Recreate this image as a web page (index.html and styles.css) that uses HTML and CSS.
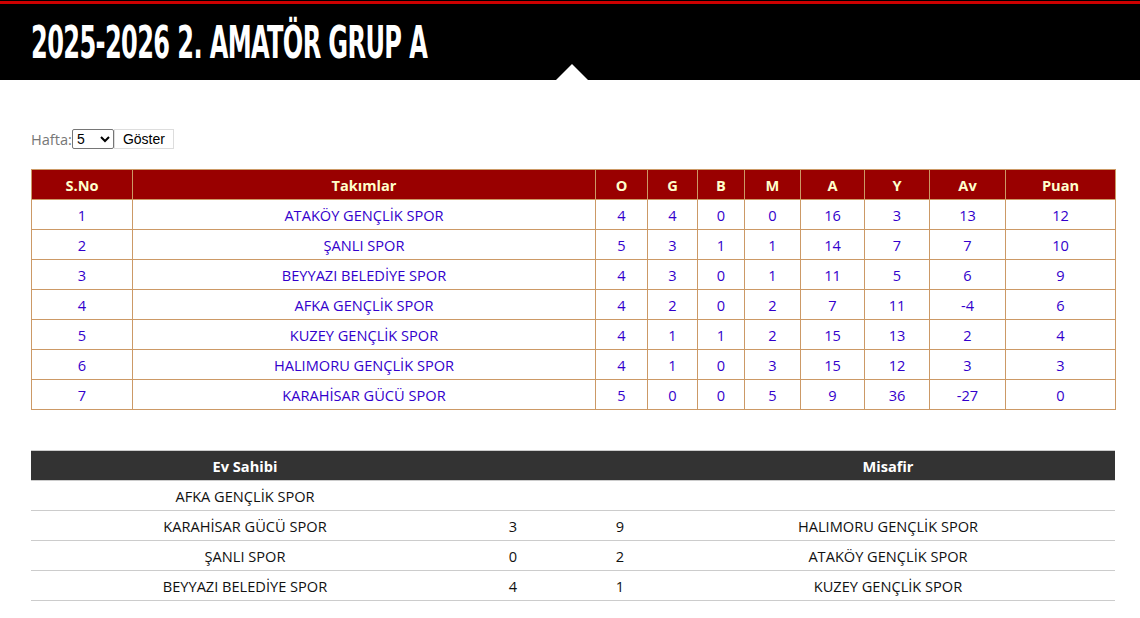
FILE: index.html
```html
<!DOCTYPE html>
<html lang="tr">
<head>
<meta charset="utf-8">
<title>2025-2026 2. Amatör Grup A</title>
<link rel="stylesheet" href="styles.css">
</head>
<body>
<header class="page-header">
  <div class="topline"></div>
  <h1 class="title">2025-2026 2. AMATÖR GRUP A</h1>
  <span class="notch"></span>
</header>
<main class="content">
  <form class="week-form">
    <label class="week-label">Hafta:</label><select class="week-select"><option>1</option><option>2</option><option>3</option><option>4</option><option selected>5</option></select><button type="button" class="week-btn">Göster</button>
  </form>

  <table class="standings">
    <colgroup>
      <col style="width:101px"><col style="width:463px"><col style="width:52px"><col style="width:50px"><col style="width:47px"><col style="width:56px"><col style="width:64px"><col style="width:65px"><col style="width:76px"><col style="width:110px">
    </colgroup>
    <thead>
      <tr><th>S.No</th><th>Takımlar</th><th>O</th><th>G</th><th>B</th><th>M</th><th>A</th><th>Y</th><th>Av</th><th>Puan</th></tr>
    </thead>
    <tbody>
      <tr><td>1</td><td>ATAKÖY GENÇLİK SPOR</td><td>4</td><td>4</td><td>0</td><td>0</td><td>16</td><td>3</td><td>13</td><td>12</td></tr>
      <tr><td>2</td><td>ŞANLI SPOR</td><td>5</td><td>3</td><td>1</td><td>1</td><td>14</td><td>7</td><td>7</td><td>10</td></tr>
      <tr><td>3</td><td>BEYYAZI BELEDİYE SPOR</td><td>4</td><td>3</td><td>0</td><td>1</td><td>11</td><td>5</td><td>6</td><td>9</td></tr>
      <tr><td>4</td><td>AFKA GENÇLİK SPOR</td><td>4</td><td>2</td><td>0</td><td>2</td><td>7</td><td>11</td><td>-4</td><td>6</td></tr>
      <tr><td>5</td><td>KUZEY GENÇLİK SPOR</td><td>4</td><td>1</td><td>1</td><td>2</td><td>15</td><td>13</td><td>2</td><td>4</td></tr>
      <tr><td>6</td><td>HALIMORU GENÇLİK SPOR</td><td>4</td><td>1</td><td>0</td><td>3</td><td>15</td><td>12</td><td>3</td><td>3</td></tr>
      <tr><td>7</td><td>KARAHİSAR GÜCÜ SPOR</td><td>5</td><td>0</td><td>0</td><td>5</td><td>9</td><td>36</td><td>-27</td><td>0</td></tr>
    </tbody>
  </table>

  <table class="fixtures">
    <colgroup>
      <col style="width:428px"><col style="width:108px"><col style="width:106px"><col style="width:442px">
    </colgroup>
    <thead>
      <tr><th>Ev Sahibi</th><th></th><th></th><th class="away">Misafir</th></tr>
    </thead>
    <tbody>
      <tr><td>AFKA GENÇLİK SPOR</td><td></td><td></td><td class="away"></td></tr>
      <tr><td>KARAHİSAR GÜCÜ SPOR</td><td>3</td><td>9</td><td class="away">HALIMORU GENÇLİK SPOR</td></tr>
      <tr><td>ŞANLI SPOR</td><td>0</td><td>2</td><td class="away">ATAKÖY GENÇLİK SPOR</td></tr>
      <tr><td>BEYYAZI BELEDİYE SPOR</td><td>4</td><td>1</td><td class="away">KUZEY GENÇLİK SPOR</td></tr>
    </tbody>
  </table>
</main>
</body>
</html>
```

FILE: styles.css
```css
html, body {
  margin: 0;
  padding: 0;
  background: #fff;
}
body {
  font-family: "Open Sans", "DejaVu Sans", sans-serif;
  font-size: 14.6px;
  color: #333;
}
.page-header {
  position: relative;
  background: #000;
  height: 80px;
  padding-top: 1px;
  box-sizing: border-box;
}
.topline {
  height: 3px;
  background: #cc0000;
}
.title {
  margin: 0;
  padding: 16px 0 0 31px;
  font-family: "DejaVu Sans Condensed", "DejaVu Sans", sans-serif;
  font-stretch: condensed;
  font-weight: bold;
  font-size: 44px;
  line-height: 46px;
  color: #fff;
  letter-spacing: -1px;
  white-space: nowrap;
  transform: scaleX(0.608);
  transform-origin: 31px 0;
}
.notch {
  position: absolute;
  left: 556px;
  bottom: 0;
  width: 0;
  height: 0;
  border-left: 16px solid transparent;
  border-right: 16px solid transparent;
  border-bottom: 16px solid #fff;
}
.content {
  padding: 49px 25px 20px 31px;
}
.week-form {
  display: flex;
  align-items: center;
  height: 20px;
  margin: 0 0 20px;
}
.week-label {
  color: #777;
  font-size: 14.6px;
}
.week-select {
  font-family: "Liberation Sans", Arial, sans-serif;
  font-size: 14px;
  height: 20px;
  width: 42px;
  padding: 0;
  border: 1px solid #767676;
  border-radius: 2px;
  background: #fff;
  color: #000;
}
.week-btn {
  font-family: "Liberation Sans", Arial, sans-serif;
  font-size: 14px;
  height: 20px;
  padding: 0 8px;
  border: 1px solid #ddd;
  background: #fff;
  color: #000;
}
.standings {
  width: 1084px;
  border-collapse: collapse;
  table-layout: fixed;
  margin-bottom: 40px;
}
.standings th,
.standings td {
  border: 1px solid #cc9966;
  height: 28px;
  padding: 1px 0 0;
  text-align: center;
}
.standings th {
  background: #990000;
  color: #ffffcc;
  font-weight: bold;
}
.standings td {
  color: #3300cc;
}
.fixtures {
  width: 1084px;
  border-collapse: collapse;
  table-layout: fixed;
}
.fixtures th {
  background: #333;
  color: #fff;
  font-weight: bold;
  height: 29px;
  padding: 0;
  border-top: 1px solid #ccc;
  border-bottom: 1px solid #ccc;
}
.fixtures td {
  height: 29px;
  padding: 0;
  text-align: center;
  color: #111;
  border-bottom: 1px solid #ccc;
}
.fixtures .away {
  padding-right: 12px;
}
```
